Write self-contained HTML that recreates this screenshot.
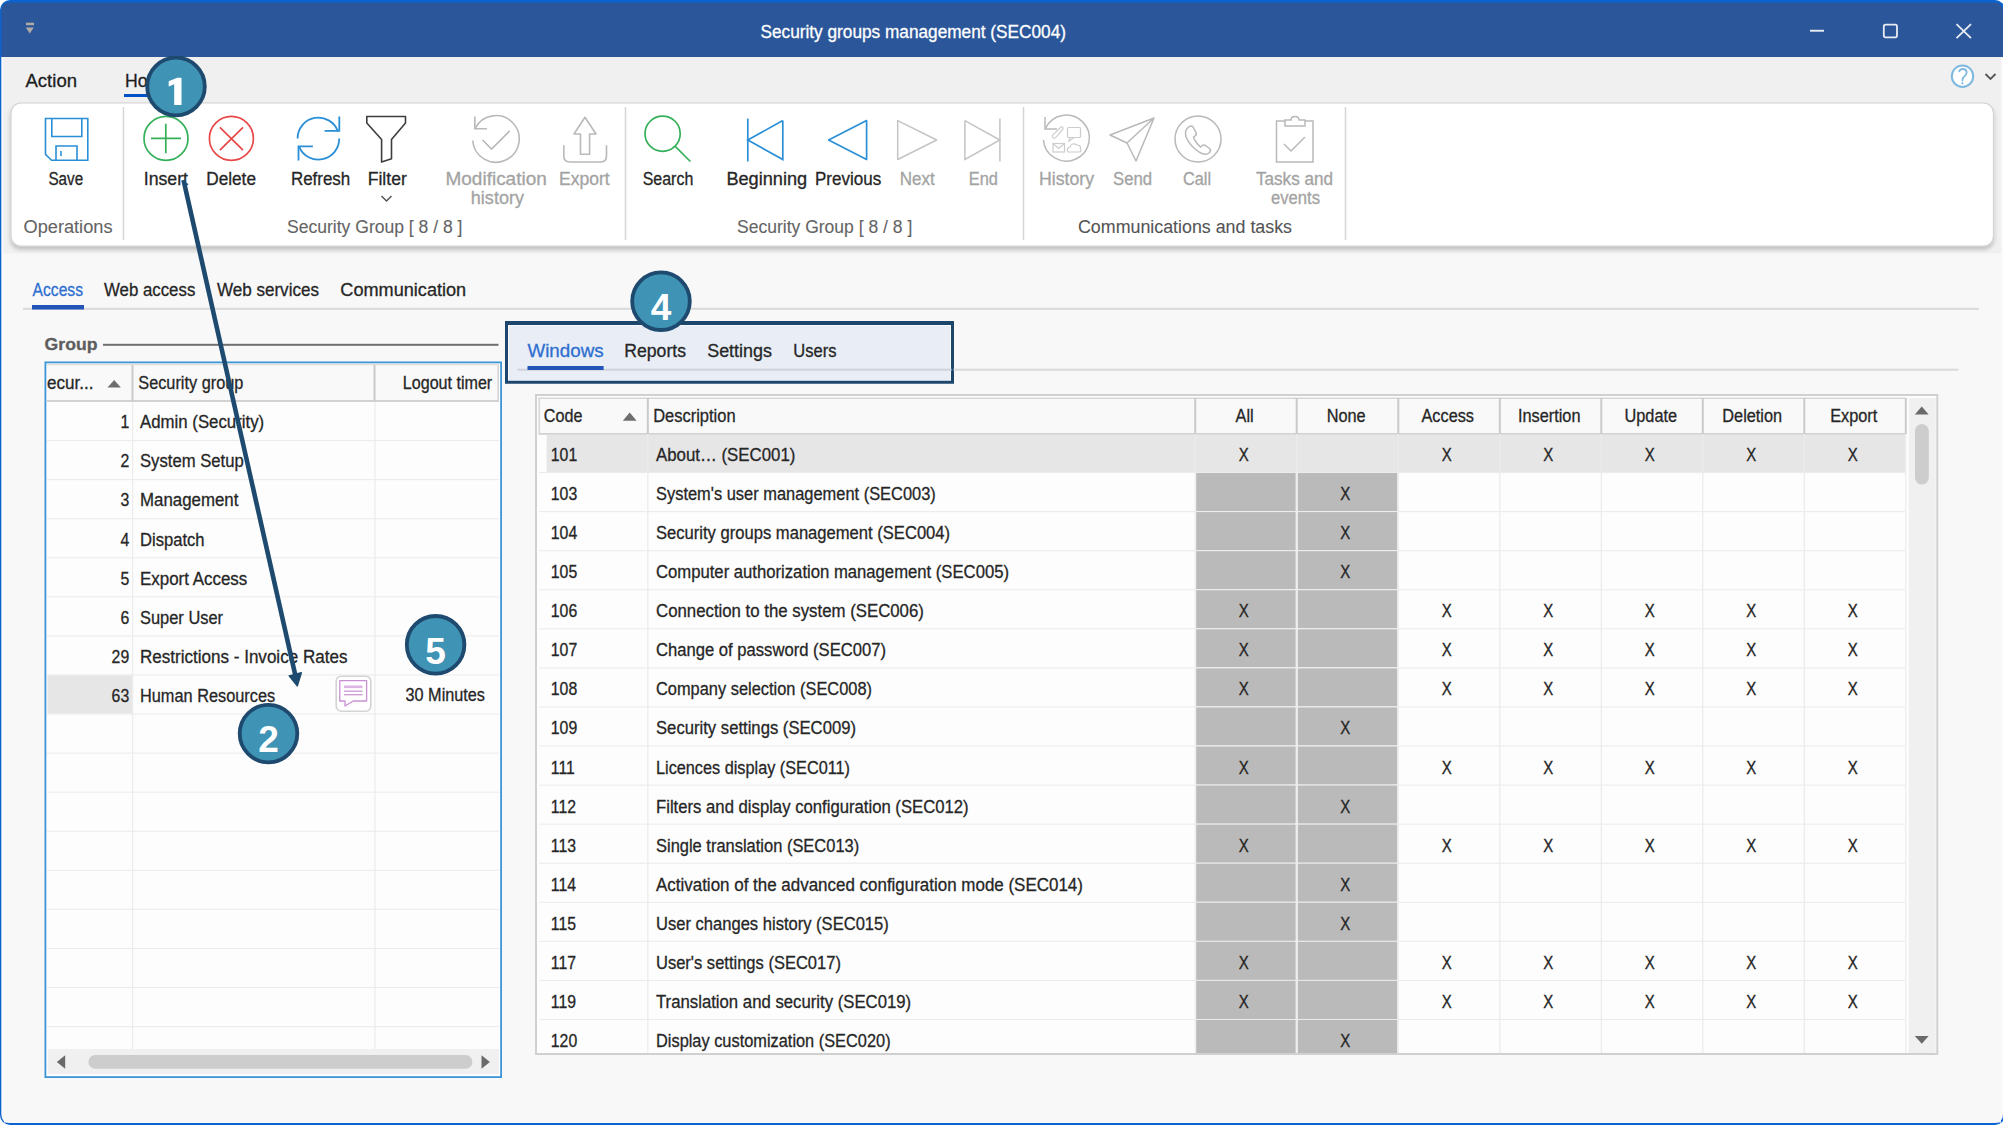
<!DOCTYPE html>
<html><head><meta charset="utf-8"><title>Security groups management (SEC004)</title>
<style>html,body{margin:0;padding:0;background:#fff;overflow:hidden}svg{display:block;font-family:"Liberation Sans",sans-serif}</style>
</head><body>
<svg width="2003" height="1125" viewBox="0 0 2003 1125">
<rect x="0" y="0" width="2003" height="1125" fill="#ffffff"/>
<rect x="0" y="0" width="2005" height="1125" rx="10" ry="10" fill="#0b63cf"/>
<path d="M1.3,57 L1.3,11 Q1.3,2.6 9.7,2.6 L1994,2.6 Q2003,2.6 2003,11.5 L2003,57 Z" fill="#2b579a"/>
<path d="M1.3,57 L1.3,1114 Q1.3,1123 10.3,1123 L1994,1123 Q2003,1123 2003,1114 L2003,57 Z" fill="#fafafa"/>
<rect x="26" y="22.7" width="8" height="2.5" fill="#b0aaa4"/><path d="M25.8,27.6 L33.8,27.6 L29.8,33.4 Z" fill="#b0aaa4"/>
<text x="760.5" y="38.0" font-size="18.3" fill="#ffffff" stroke="#ffffff" stroke-width="0.3" textLength="305.5" lengthAdjust="spacingAndGlyphs">Security groups management (SEC004)</text>
<rect x="1810" y="29.8" width="14" height="1.9" fill="#e9ecf3"/>
<rect x="1883.8" y="24.6" width="13.2" height="12.8" rx="1.8" fill="none" stroke="#e9ecf3" stroke-width="1.8"/>
<path d="M1956.5,24.2 L1971,38.2 M1971,24.2 L1956.5,38.2" stroke="#e9ecf3" stroke-width="1.8"/>
<rect x="3.1" y="57" width="1998" height="197" fill="#f0f0f0"/>
<text x="25.5" y="86.5" font-size="18.3" fill="#1e1e1e" stroke="#1e1e1e" stroke-width="0.3" textLength="51.5" lengthAdjust="spacingAndGlyphs">Action</text>
<text x="125.0" y="86.5" font-size="18.3" fill="#1e1e1e" stroke="#1e1e1e" stroke-width="0.3" textLength="47.0" lengthAdjust="spacingAndGlyphs">Home</text>
<rect x="124" y="94" width="52" height="3" fill="#0050c8"/>
<circle cx="1962.5" cy="76.2" r="10.7" fill="#ffffff" stroke="#80b9e0" stroke-width="2"/>
<path d="M1959.2,71.3 Q1960,69 1962.8,69 Q1966.6,69 1966.6,72.5 Q1966.6,75 1963.8,77 Q1962.4,78.2 1962.4,80.6" fill="none" stroke="#80b9e0" stroke-width="1.8" stroke-linecap="round"/><circle cx="1962.4" cy="83.3" r="1.15" fill="#80b9e0"/>
<path d="M1985.5,74 L1990.5,79 L1995.5,74" fill="none" stroke="#555" stroke-width="1.8"/>
<defs><filter id="sh" x="-5%" y="-20%" width="110%" height="140%"><feGaussianBlur in="SourceAlpha" stdDeviation="2"/><feOffset dy="2.5"/><feComponentTransfer><feFuncA type="linear" slope="0.22"/></feComponentTransfer><feMerge><feMergeNode/><feMergeNode in="SourceGraphic"/></feMerge></filter></defs>
<rect x="11" y="103" width="1982.5" height="143" rx="10" ry="10" fill="#ffffff" stroke="#d2d2d2" stroke-width="1.2" filter="url(#sh)"/>
<rect x="122.75" y="107" width="1.5" height="133" fill="#d6d6d6"/>
<rect x="624.75" y="107" width="1.5" height="133" fill="#d6d6d6"/>
<rect x="1022.75" y="107" width="1.5" height="133" fill="#d6d6d6"/>
<rect x="1344.75" y="107" width="1.5" height="133" fill="#d6d6d6"/>
<g fill="none" stroke="#2a8fd6" stroke-width="1.6"><path d="M45.5,118.5 L87.8,118.5 L87.8,160.3 L51.5,160.3 L45.5,154.3 Z"/><path d="M51.8,118.5 L51.8,136.5 L81.8,136.5 L81.8,118.5"/><path d="M56,160.3 L56,146 L77,146 L77,160.3"/><path d="M61,151 L61,156"/></g>
<text x="48.4" y="184.7" font-size="18.3" fill="#262626" stroke="#262626" stroke-width="0.3" textLength="34.8" lengthAdjust="spacingAndGlyphs">Save</text>
<text x="23.5" y="232.9" font-size="18.3" fill="#646464" stroke="#646464" stroke-width="0.1" textLength="89.0" lengthAdjust="spacingAndGlyphs">Operations</text>
<g fill="none" stroke="#35b05a" stroke-width="1.7"><circle cx="166" cy="138.4" r="22"/><path d="M151,138.4 L181,138.4 M165.8,123.8 L165.8,153.2"/></g>
<text x="143.8" y="184.7" font-size="18.3" fill="#262626" stroke="#262626" stroke-width="0.3" textLength="44.2" lengthAdjust="spacingAndGlyphs">Insert</text>
<g fill="none" stroke="#e94848" stroke-width="1.7"><circle cx="231.4" cy="138.4" r="22"/><path d="M219.9,127.3 L243,150.2 M243,127.3 L219.9,150.2"/></g>
<text x="206.2" y="184.7" font-size="18.3" fill="#262626" stroke="#262626" stroke-width="0.3" textLength="49.8" lengthAdjust="spacingAndGlyphs">Delete</text>
<g fill="none" stroke="#2a8fd6" stroke-width="1.8"><path d="M297.6,138.5 A20.8,20.8 0 0 1 337.9,131.2"/><path d="M339.3,116.4 L339.3,130.8 L324.6,130.8"/><path d="M339.2,138.5 A20.8,20.8 0 0 1 299.2,146.8"/><path d="M298.5,160.6 L298.5,146.3 L312.9,146.3"/></g>
<text x="290.9" y="184.7" font-size="18.3" fill="#262626" stroke="#262626" stroke-width="0.3" textLength="59.4" lengthAdjust="spacingAndGlyphs">Refresh</text>
<path d="M366.8,116.5 L405.5,116.5 L405.5,123 L391.5,139.5 L391.5,158.7 L381.6,162 L381.6,139.5 L366.8,123 Z" fill="none" stroke="#3d3d3d" stroke-width="1.6" stroke-linejoin="round"/>
<text x="367.7" y="184.7" font-size="18.3" fill="#262626" stroke="#262626" stroke-width="0.3" textLength="39.1" lengthAdjust="spacingAndGlyphs">Filter</text>
<path d="M381.5,196 L386.5,201 L391.5,196" fill="none" stroke="#555" stroke-width="1.5"/>
<g fill="none" stroke="#b9b9b9" stroke-width="1.6"><path d="M475.2,128.3 A23.3,23.3 0 1 1 472.7,140.5"/><path d="M474.8,116.5 L474.8,128.8 L487,128.8"/><path d="M482.5,140 L491.6,149 L509.7,130.9"/></g>
<text x="445.5" y="184.7" font-size="18.3" fill="#a3a3a3" stroke="#a3a3a3" stroke-width="0.3" textLength="101.3" lengthAdjust="spacingAndGlyphs">Modification</text>
<text x="470.8" y="204.3" font-size="18.3" fill="#a3a3a3" stroke="#a3a3a3" stroke-width="0.3" textLength="53.2" lengthAdjust="spacingAndGlyphs">history</text>
<g fill="none" stroke="#b9b9b9" stroke-width="1.6" stroke-linejoin="round"><path d="M585,117.3 L596,134 L589.6,134 L589.6,154.3 L580.5,154.3 L580.5,134 L574,134 Z"/><path d="M563.8,145.2 L563.8,156 Q563.8,162 569.8,162 L600.5,162 Q606.5,162 606.5,156 L606.5,145.2"/></g>
<text x="559.0" y="184.7" font-size="18.3" fill="#a3a3a3" stroke="#a3a3a3" stroke-width="0.3" textLength="50.7" lengthAdjust="spacingAndGlyphs">Export</text>
<text x="287.0" y="232.9" font-size="18.3" fill="#646464" stroke="#646464" stroke-width="0.1" textLength="175.5" lengthAdjust="spacingAndGlyphs">Security Group [ 8 / 8 ]</text>
<g fill="none" stroke="#35b05a" stroke-width="1.7"><circle cx="662.6" cy="133.7" r="17.6"/><path d="M675,146.2 L690.4,161.5"/></g>
<text x="642.7" y="184.7" font-size="18.3" fill="#262626" stroke="#262626" stroke-width="0.3" textLength="50.6" lengthAdjust="spacingAndGlyphs">Search</text>
<g fill="none" stroke="#2a8fd6" stroke-width="1.7"><path d="M747.8,118.6 L747.8,161.5"/><path d="M782.8,120.6 L782.8,159.5 L747.8,140 L782.8,120.6"/></g>
<text x="726.4" y="184.7" font-size="18.3" fill="#262626" stroke="#262626" stroke-width="0.3" textLength="80.8" lengthAdjust="spacingAndGlyphs">Beginning</text>
<path d="M866.6,120.6 L866.6,159.5 L828.6,140 Z" fill="none" stroke="#2a8fd6" stroke-width="1.7" stroke-linejoin="round"/>
<text x="815.0" y="184.7" font-size="18.3" fill="#262626" stroke="#262626" stroke-width="0.3" textLength="66.2" lengthAdjust="spacingAndGlyphs">Previous</text>
<path d="M897.7,120.6 L897.7,159.5 L936.7,140 Z" fill="none" stroke="#c4c4c4" stroke-width="1.5" stroke-linejoin="round"/>
<text x="899.7" y="184.7" font-size="18.3" fill="#a3a3a3" stroke="#a3a3a3" stroke-width="0.3" textLength="35.0" lengthAdjust="spacingAndGlyphs">Next</text>
<g fill="none" stroke="#c4c4c4" stroke-width="1.5"><path d="M999.9,118.6 L999.9,161.5"/><path d="M964.9,120.6 L964.9,159.5 L999.9,140 L964.9,120.6"/></g>
<text x="968.8" y="184.7" font-size="18.3" fill="#a3a3a3" stroke="#a3a3a3" stroke-width="0.3" textLength="29.2" lengthAdjust="spacingAndGlyphs">End</text>
<text x="737.0" y="232.9" font-size="18.3" fill="#646464" stroke="#646464" stroke-width="0.1" textLength="175.3" lengthAdjust="spacingAndGlyphs">Security Group [ 8 / 8 ]</text>
<g fill="none" stroke="#b9b9b9" stroke-width="1.5"><path d="M1045.5,128.3 A23,23 0 1 1 1043.4,140"/><path d="M1045,117 L1045,129 L1057,129"/></g>
<g fill="none" stroke="#cdcdcd" stroke-width="1.2"><rect x="1067.5" y="127.5" width="13" height="10" rx="1"/><path d="M1070,137.5 L1069,141 L1074,137.5"/><rect x="1053" y="143.5" width="11.5" height="8.5"/><path d="M1053,143.5 L1058.7,148.5 L1064.5,143.5"/><path d="M1068,152 Q1066,148 1070,147 Q1072,142 1077,145 Q1081,145 1080.5,149 Q1082,152 1079,152 Z"/><path d="M1053,138 Q1051,135 1055,133 L1061,127 Q1063,126 1063,129 L1057,136 Q1055,139 1053,138 Z"/></g>
<text x="1039.0" y="184.7" font-size="18.3" fill="#a3a3a3" stroke="#a3a3a3" stroke-width="0.3" textLength="55.0" lengthAdjust="spacingAndGlyphs">History</text>
<path d="M1110,135 L1154,118 L1136,161 L1127,143 Z M1127,143 L1154,118" fill="none" stroke="#b9b9b9" stroke-width="1.5" stroke-linejoin="round"/>
<text x="1113.0" y="184.7" font-size="18.3" fill="#a3a3a3" stroke="#a3a3a3" stroke-width="0.3" textLength="39.0" lengthAdjust="spacingAndGlyphs">Send</text>
<g fill="none" stroke="#b9b9b9" stroke-width="1.5"><circle cx="1198" cy="139" r="23"/><path d="M1187.5,128 Q1191,124.5 1193,127 L1196,132.5 Q1197,134.5 1195,136 L1193.5,137 Q1195,142 1200.5,147 L1202,145.7 Q1203.5,144.3 1205.5,145.5 L1210,149 Q1211.5,151 1209,153 Q1205.5,156 1199,152 Q1190,146 1186,137 Q1184.5,131 1187.5,128 Z"/></g>
<text x="1183.0" y="184.7" font-size="18.3" fill="#a3a3a3" stroke="#a3a3a3" stroke-width="0.3" textLength="28.0" lengthAdjust="spacingAndGlyphs">Call</text>
<g fill="none" stroke="#b9b9b9" stroke-width="1.5"><path d="M1285,121 L1276.5,121 L1276.5,162 L1313,162 L1313,121 L1305,121"/><path d="M1285,126 L1285,120 L1291,120 Q1291,116.5 1295,116.5 Q1299,116.5 1299,120 L1305,120 L1305,126 Z"/><path d="M1284,144 L1291,151 L1305,137"/></g>
<text x="1256.0" y="184.7" font-size="18.3" fill="#a3a3a3" stroke="#a3a3a3" stroke-width="0.3" textLength="77.0" lengthAdjust="spacingAndGlyphs">Tasks and</text>
<text x="1271.0" y="204.3" font-size="18.3" fill="#a3a3a3" stroke="#a3a3a3" stroke-width="0.3" textLength="49.0" lengthAdjust="spacingAndGlyphs">events</text>
<text x="1078.0" y="232.9" font-size="18.3" fill="#545454" stroke="#545454" stroke-width="0.1" textLength="214.0" lengthAdjust="spacingAndGlyphs">Communications and tasks</text>
<rect x="4" y="253.5" width="1997" height="869.0" fill="#f8f8f8"/>
<rect x="23" y="307.8" width="1955.8" height="2" fill="#d9d9d9"/>
<text x="32.6" y="295.8" font-size="18.3" fill="#2f6fd0" stroke="#2f6fd0" stroke-width="0.3" textLength="50.4" lengthAdjust="spacingAndGlyphs">Access</text>
<rect x="32" y="305" width="52" height="4.5" fill="#2355b8"/>
<text x="104.0" y="296.0" font-size="18.3" fill="#262626" stroke="#262626" stroke-width="0.3" textLength="91.3" lengthAdjust="spacingAndGlyphs">Web access</text>
<text x="216.9" y="296.0" font-size="18.3" fill="#262626" stroke="#262626" stroke-width="0.3" textLength="102.1" lengthAdjust="spacingAndGlyphs">Web services</text>
<text x="340.3" y="296.0" font-size="18.3" fill="#262626" stroke="#262626" stroke-width="0.3" textLength="125.9" lengthAdjust="spacingAndGlyphs">Communication</text>
<text x="44.6" y="349.6" font-size="16.5" fill="#5e5e5e" font-weight="bold" stroke="#5e5e5e" stroke-width="0.3" textLength="52.8" lengthAdjust="spacingAndGlyphs">Group</text>
<rect x="103" y="343.8" width="395.5" height="2" fill="#707070"/>
<rect x="45.5" y="362.5" width="455.5" height="714.5" fill="#fdfdfd"/>
<rect x="47" y="364.5" width="452" height="37" fill="#f9f9f9"/>
<rect x="47" y="364" width="452" height="1.2" fill="#e3dcd8"/>
<rect x="47" y="400" width="452" height="2" fill="#d2d2d2"/>
<rect x="131.5" y="365" width="2" height="36" fill="#cacaca"/>
<rect x="373.5" y="365" width="2" height="36" fill="#cacaca"/>
<rect x="497.5" y="365" width="1.5" height="36" fill="#d2d2d2"/>
<text x="47.0" y="388.6" font-size="18.3" fill="#262626" stroke="#262626" stroke-width="0.3" textLength="46.5" lengthAdjust="spacingAndGlyphs">ecur...</text>
<path d="M107.5,387.4 L120.8,387.4 L114.2,380 Z" fill="#6e6e6e"/>
<text x="138.3" y="388.6" font-size="18.3" fill="#262626" stroke="#262626" stroke-width="0.3" textLength="105.0" lengthAdjust="spacingAndGlyphs">Security group</text>
<text x="402.8" y="388.6" font-size="18.3" fill="#262626" stroke="#262626" stroke-width="0.3" textLength="89.4" lengthAdjust="spacingAndGlyphs">Logout timer</text>
<rect x="47" y="440.00" width="452" height="1.1" fill="#ececec"/>
<rect x="47" y="479.07" width="452" height="1.1" fill="#ececec"/>
<rect x="47" y="518.14" width="452" height="1.1" fill="#ececec"/>
<rect x="47" y="557.21" width="452" height="1.1" fill="#ececec"/>
<rect x="47" y="596.28" width="452" height="1.1" fill="#ececec"/>
<rect x="47" y="635.35" width="452" height="1.1" fill="#ececec"/>
<rect x="47" y="674.42" width="452" height="1.1" fill="#ececec"/>
<rect x="47" y="713.49" width="452" height="1.1" fill="#ececec"/>
<rect x="47" y="752.56" width="452" height="1.1" fill="#ececec"/>
<rect x="47" y="791.63" width="452" height="1.1" fill="#ececec"/>
<rect x="47" y="830.70" width="452" height="1.1" fill="#ececec"/>
<rect x="47" y="869.77" width="452" height="1.1" fill="#ececec"/>
<rect x="47" y="908.84" width="452" height="1.1" fill="#ececec"/>
<rect x="47" y="947.91" width="452" height="1.1" fill="#ececec"/>
<rect x="47" y="986.98" width="452" height="1.1" fill="#ececec"/>
<rect x="47" y="1026.05" width="452" height="1.1" fill="#ececec"/>
<rect x="47" y="1065.12" width="452" height="1.1" fill="#ececec"/>
<rect x="132" y="402" width="1.2" height="647" fill="#ececec"/>
<rect x="374.3" y="402" width="1.2" height="647" fill="#ececec"/>
<rect x="47.5" y="675.5" width="84.5" height="38" fill="#e6e6e6"/>
<text x="120.4" y="428.3" font-size="18.3" fill="#262626" stroke="#262626" stroke-width="0.3" textLength="8.8" lengthAdjust="spacingAndGlyphs">1</text>
<text x="140.0" y="428.3" font-size="18.3" fill="#262626" stroke="#262626" stroke-width="0.3" textLength="124.2" lengthAdjust="spacingAndGlyphs">Admin (Security)</text>
<text x="120.4" y="467.4" font-size="18.3" fill="#262626" stroke="#262626" stroke-width="0.3" textLength="8.8" lengthAdjust="spacingAndGlyphs">2</text>
<text x="140.0" y="467.4" font-size="18.3" fill="#262626" stroke="#262626" stroke-width="0.3" textLength="103.7" lengthAdjust="spacingAndGlyphs">System Setup</text>
<text x="120.4" y="506.4" font-size="18.3" fill="#262626" stroke="#262626" stroke-width="0.3" textLength="8.8" lengthAdjust="spacingAndGlyphs">3</text>
<text x="140.0" y="506.4" font-size="18.3" fill="#262626" stroke="#262626" stroke-width="0.3" textLength="98.4" lengthAdjust="spacingAndGlyphs">Management</text>
<text x="120.4" y="545.5" font-size="18.3" fill="#262626" stroke="#262626" stroke-width="0.3" textLength="8.8" lengthAdjust="spacingAndGlyphs">4</text>
<text x="140.0" y="545.5" font-size="18.3" fill="#262626" stroke="#262626" stroke-width="0.3" textLength="64.6" lengthAdjust="spacingAndGlyphs">Dispatch</text>
<text x="120.4" y="584.6" font-size="18.3" fill="#262626" stroke="#262626" stroke-width="0.3" textLength="8.8" lengthAdjust="spacingAndGlyphs">5</text>
<text x="140.0" y="584.6" font-size="18.3" fill="#262626" stroke="#262626" stroke-width="0.3" textLength="107.3" lengthAdjust="spacingAndGlyphs">Export Access</text>
<text x="120.4" y="623.6" font-size="18.3" fill="#262626" stroke="#262626" stroke-width="0.3" textLength="8.8" lengthAdjust="spacingAndGlyphs">6</text>
<text x="140.0" y="623.6" font-size="18.3" fill="#262626" stroke="#262626" stroke-width="0.3" textLength="83.1" lengthAdjust="spacingAndGlyphs">Super User</text>
<text x="111.6" y="662.7" font-size="18.3" fill="#262626" stroke="#262626" stroke-width="0.3" textLength="17.6" lengthAdjust="spacingAndGlyphs">29</text>
<text x="140.0" y="662.7" font-size="18.3" fill="#262626" stroke="#262626" stroke-width="0.3" textLength="207.4" lengthAdjust="spacingAndGlyphs">Restrictions - Invoice Rates</text>
<text x="111.6" y="701.8" font-size="18.3" fill="#262626" stroke="#262626" stroke-width="0.3" textLength="17.6" lengthAdjust="spacingAndGlyphs">63</text>
<text x="140.0" y="701.8" font-size="18.3" fill="#262626" stroke="#262626" stroke-width="0.3" textLength="135.2" lengthAdjust="spacingAndGlyphs">Human Resources</text>
<text x="405.5" y="700.5" font-size="18.3" fill="#262626" stroke="#262626" stroke-width="0.3" textLength="79.5" lengthAdjust="spacingAndGlyphs">30 Minutes</text>
<rect x="336.2" y="676.2" width="34.6" height="35" rx="5" fill="#ffffff" stroke="#d4d4d4" stroke-width="1.6"/>
<path d="M339.8,680.6 L366.6,680.6 L366.6,701 L353.2,701 L345,706 L345,701 L339.8,701 Z" fill="none" stroke="#c891d2" stroke-width="1.3" stroke-linejoin="round"/>
<rect x="344" y="685.5" width="18.5" height="2.6" fill="#dcb6e2"/><rect x="344" y="690.5" width="18.5" height="1.4" fill="#cf9fd7"/><rect x="344" y="694" width="18.5" height="1.4" fill="#cf9fd7"/>
<rect x="48" y="1049" width="451" height="25" fill="#f0f0f0"/>
<path d="M65.2,1055.2 L65.2,1068.8 L56.8,1062 Z" fill="#6a6a6a"/>
<rect x="88.4" y="1055" width="384" height="13.8" rx="6.9" fill="#cdcdcd"/>
<path d="M481.5,1055.2 L481.5,1068.8 L489.9,1062 Z" fill="#6a6a6a"/>
<rect x="45.4" y="362.4" width="455.7" height="714.7" fill="none" stroke="#3b95d6" stroke-width="1.8"/>
<rect x="508" y="325" width="443" height="56" fill="#e9eef6"/>
<rect x="508.5" y="325.5" width="442" height="55" fill="none" stroke="#f7f9fc" stroke-width="1"/>
<path d="M505,321 L954,321 L954,383.7 L505,383.7 Z M508,325 L508,380.8 L951,380.8 L951,325 Z" fill="#1d466c" fill-rule="evenodd"/>
<rect x="517.5" y="368.7" width="434" height="2" fill="#cfd3d9"/>
<rect x="953.5" y="368.7" width="1005" height="2" fill="#d9d9d9"/>
<text x="527.5" y="356.9" font-size="18.3" fill="#2f6fd0" stroke="#2f6fd0" stroke-width="0.3" textLength="76.1" lengthAdjust="spacingAndGlyphs">Windows</text>
<rect x="527.5" y="366" width="76.1" height="4" fill="#2355b8"/>
<text x="624.3" y="356.9" font-size="18.3" fill="#262626" stroke="#262626" stroke-width="0.3" textLength="61.7" lengthAdjust="spacingAndGlyphs">Reports</text>
<text x="707.2" y="356.9" font-size="18.3" fill="#262626" stroke="#262626" stroke-width="0.3" textLength="64.8" lengthAdjust="spacingAndGlyphs">Settings</text>
<text x="793.3" y="356.9" font-size="18.3" fill="#262626" stroke="#262626" stroke-width="0.3" textLength="43.2" lengthAdjust="spacingAndGlyphs">Users</text>
<rect x="535" y="394" width="1403.3" height="661" fill="#fdfdfd"/>
<rect x="538.5" y="398" width="1367" height="36" fill="#f9f9f9"/>
<rect x="538.5" y="397.5" width="1367" height="1.5" fill="#d6d6d6"/>
<rect x="538.5" y="433" width="1367" height="1.8" fill="#d2d2d2"/>
<rect x="538.5" y="398" width="1.5" height="36" fill="#d6d6d6"/>
<rect x="646.8" y="398" width="2" height="36" fill="#cacaca"/>
<rect x="1194.2" y="398" width="2" height="36" fill="#cacaca"/>
<rect x="1295.7" y="398" width="2" height="36" fill="#cacaca"/>
<rect x="1397.3" y="398" width="2" height="36" fill="#cacaca"/>
<rect x="1498.8" y="398" width="2" height="36" fill="#cacaca"/>
<rect x="1600.3" y="398" width="2" height="36" fill="#cacaca"/>
<rect x="1701.8" y="398" width="2" height="36" fill="#cacaca"/>
<rect x="1803.3" y="398" width="2" height="36" fill="#cacaca"/>
<rect x="1904.8" y="398" width="2" height="36" fill="#cacaca"/>
<text x="543.8" y="421.6" font-size="18.3" fill="#262626" stroke="#262626" stroke-width="0.3" textLength="38.6" lengthAdjust="spacingAndGlyphs">Code</text>
<path d="M622.8,420.8 L636.6,420.8 L629.7,412.6 Z" fill="#6e6e6e"/>
<text x="653.2" y="421.6" font-size="18.3" fill="#262626" stroke="#262626" stroke-width="0.3" textLength="82.4" lengthAdjust="spacingAndGlyphs">Description</text>
<text x="1235.6" y="421.6" font-size="18.3" fill="#262626" stroke="#262626" stroke-width="0.3" textLength="18.1" lengthAdjust="spacingAndGlyphs">All</text>
<text x="1326.7" y="421.6" font-size="18.3" fill="#262626" stroke="#262626" stroke-width="0.3" textLength="39.0" lengthAdjust="spacingAndGlyphs">None</text>
<text x="1421.5" y="421.6" font-size="18.3" fill="#262626" stroke="#262626" stroke-width="0.3" textLength="52.5" lengthAdjust="spacingAndGlyphs">Access</text>
<text x="1518.0" y="421.6" font-size="18.3" fill="#262626" stroke="#262626" stroke-width="0.3" textLength="62.5" lengthAdjust="spacingAndGlyphs">Insertion</text>
<text x="1624.5" y="421.6" font-size="18.3" fill="#262626" stroke="#262626" stroke-width="0.3" textLength="52.6" lengthAdjust="spacingAndGlyphs">Update</text>
<text x="1722.3" y="421.6" font-size="18.3" fill="#262626" stroke="#262626" stroke-width="0.3" textLength="59.8" lengthAdjust="spacingAndGlyphs">Deletion</text>
<text x="1830.2" y="421.6" font-size="18.3" fill="#262626" stroke="#262626" stroke-width="0.3" textLength="47.1" lengthAdjust="spacingAndGlyphs">Export</text>
<svg x="0" y="0" width="2003" height="1053">
<rect x="546.6" y="434.8" width="1358.5" height="37.6" fill="#e6e6e6"/>
<rect x="539" y="472.00" width="1366" height="1.1" fill="#ececec"/>
<text x="550.8" y="460.9" font-size="18.3" fill="#262626" stroke="#262626" stroke-width="0.3" textLength="26.4" lengthAdjust="spacingAndGlyphs">101</text>
<text x="656.0" y="460.9" font-size="18.3" fill="#262626" stroke="#262626" stroke-width="0.3" textLength="139.4" lengthAdjust="spacingAndGlyphs">About… (SEC001)</text>
<text x="1238.7" y="460.9" font-size="17.6" fill="#262626" stroke="#262626" stroke-width="0.3" textLength="10.0" lengthAdjust="spacingAndGlyphs">X</text>
<text x="1441.8" y="460.9" font-size="17.6" fill="#262626" stroke="#262626" stroke-width="0.3" textLength="10.0" lengthAdjust="spacingAndGlyphs">X</text>
<text x="1543.3" y="460.9" font-size="17.6" fill="#262626" stroke="#262626" stroke-width="0.3" textLength="10.0" lengthAdjust="spacingAndGlyphs">X</text>
<text x="1644.8" y="460.9" font-size="17.6" fill="#262626" stroke="#262626" stroke-width="0.3" textLength="10.0" lengthAdjust="spacingAndGlyphs">X</text>
<text x="1746.3" y="460.9" font-size="17.6" fill="#262626" stroke="#262626" stroke-width="0.3" textLength="10.0" lengthAdjust="spacingAndGlyphs">X</text>
<text x="1847.8" y="460.9" font-size="17.6" fill="#262626" stroke="#262626" stroke-width="0.3" textLength="10.0" lengthAdjust="spacingAndGlyphs">X</text>
<rect x="1196.2" y="473.00" width="99.5" height="38.1" fill="#bababa"/>
<rect x="1297.7" y="473.00" width="99.59999999999991" height="38.1" fill="#bababa"/>
<rect x="539" y="511.07" width="1366" height="1.1" fill="#ececec"/>
<text x="550.8" y="500.0" font-size="18.3" fill="#262626" stroke="#262626" stroke-width="0.3" textLength="26.4" lengthAdjust="spacingAndGlyphs">103</text>
<text x="656.0" y="500.0" font-size="18.3" fill="#262626" stroke="#262626" stroke-width="0.3" textLength="279.8" lengthAdjust="spacingAndGlyphs">System's user management (SEC003)</text>
<text x="1340.3" y="500.0" font-size="17.6" fill="#262626" stroke="#262626" stroke-width="0.3" textLength="10.0" lengthAdjust="spacingAndGlyphs">X</text>
<rect x="1196.2" y="512.07" width="99.5" height="38.1" fill="#bababa"/>
<rect x="1297.7" y="512.07" width="99.59999999999991" height="38.1" fill="#bababa"/>
<rect x="539" y="550.14" width="1366" height="1.1" fill="#ececec"/>
<text x="550.8" y="539.0" font-size="18.3" fill="#262626" stroke="#262626" stroke-width="0.3" textLength="26.4" lengthAdjust="spacingAndGlyphs">104</text>
<text x="656.0" y="539.0" font-size="18.3" fill="#262626" stroke="#262626" stroke-width="0.3" textLength="294.1" lengthAdjust="spacingAndGlyphs">Security groups management (SEC004)</text>
<text x="1340.3" y="539.0" font-size="17.6" fill="#262626" stroke="#262626" stroke-width="0.3" textLength="10.0" lengthAdjust="spacingAndGlyphs">X</text>
<rect x="1196.2" y="551.14" width="99.5" height="38.1" fill="#bababa"/>
<rect x="1297.7" y="551.14" width="99.59999999999991" height="38.1" fill="#bababa"/>
<rect x="539" y="589.21" width="1366" height="1.1" fill="#ececec"/>
<text x="550.8" y="578.1" font-size="18.3" fill="#262626" stroke="#262626" stroke-width="0.3" textLength="26.4" lengthAdjust="spacingAndGlyphs">105</text>
<text x="656.0" y="578.1" font-size="18.3" fill="#262626" stroke="#262626" stroke-width="0.3" textLength="353.0" lengthAdjust="spacingAndGlyphs">Computer authorization management (SEC005)</text>
<text x="1340.3" y="578.1" font-size="17.6" fill="#262626" stroke="#262626" stroke-width="0.3" textLength="10.0" lengthAdjust="spacingAndGlyphs">X</text>
<rect x="1196.2" y="590.21" width="99.5" height="38.1" fill="#bababa"/>
<rect x="1297.7" y="590.21" width="99.59999999999991" height="38.1" fill="#bababa"/>
<rect x="539" y="628.28" width="1366" height="1.1" fill="#ececec"/>
<text x="550.8" y="617.2" font-size="18.3" fill="#262626" stroke="#262626" stroke-width="0.3" textLength="26.4" lengthAdjust="spacingAndGlyphs">106</text>
<text x="656.0" y="617.2" font-size="18.3" fill="#262626" stroke="#262626" stroke-width="0.3" textLength="267.9" lengthAdjust="spacingAndGlyphs">Connection to the system (SEC006)</text>
<text x="1238.7" y="617.2" font-size="17.6" fill="#262626" stroke="#262626" stroke-width="0.3" textLength="10.0" lengthAdjust="spacingAndGlyphs">X</text>
<text x="1441.8" y="617.2" font-size="17.6" fill="#262626" stroke="#262626" stroke-width="0.3" textLength="10.0" lengthAdjust="spacingAndGlyphs">X</text>
<text x="1543.3" y="617.2" font-size="17.6" fill="#262626" stroke="#262626" stroke-width="0.3" textLength="10.0" lengthAdjust="spacingAndGlyphs">X</text>
<text x="1644.8" y="617.2" font-size="17.6" fill="#262626" stroke="#262626" stroke-width="0.3" textLength="10.0" lengthAdjust="spacingAndGlyphs">X</text>
<text x="1746.3" y="617.2" font-size="17.6" fill="#262626" stroke="#262626" stroke-width="0.3" textLength="10.0" lengthAdjust="spacingAndGlyphs">X</text>
<text x="1847.8" y="617.2" font-size="17.6" fill="#262626" stroke="#262626" stroke-width="0.3" textLength="10.0" lengthAdjust="spacingAndGlyphs">X</text>
<rect x="1196.2" y="629.28" width="99.5" height="38.1" fill="#bababa"/>
<rect x="1297.7" y="629.28" width="99.59999999999991" height="38.1" fill="#bababa"/>
<rect x="539" y="667.35" width="1366" height="1.1" fill="#ececec"/>
<text x="550.8" y="656.2" font-size="18.3" fill="#262626" stroke="#262626" stroke-width="0.3" textLength="26.4" lengthAdjust="spacingAndGlyphs">107</text>
<text x="656.0" y="656.2" font-size="18.3" fill="#262626" stroke="#262626" stroke-width="0.3" textLength="230.0" lengthAdjust="spacingAndGlyphs">Change of password (SEC007)</text>
<text x="1238.7" y="656.2" font-size="17.6" fill="#262626" stroke="#262626" stroke-width="0.3" textLength="10.0" lengthAdjust="spacingAndGlyphs">X</text>
<text x="1441.8" y="656.2" font-size="17.6" fill="#262626" stroke="#262626" stroke-width="0.3" textLength="10.0" lengthAdjust="spacingAndGlyphs">X</text>
<text x="1543.3" y="656.2" font-size="17.6" fill="#262626" stroke="#262626" stroke-width="0.3" textLength="10.0" lengthAdjust="spacingAndGlyphs">X</text>
<text x="1644.8" y="656.2" font-size="17.6" fill="#262626" stroke="#262626" stroke-width="0.3" textLength="10.0" lengthAdjust="spacingAndGlyphs">X</text>
<text x="1746.3" y="656.2" font-size="17.6" fill="#262626" stroke="#262626" stroke-width="0.3" textLength="10.0" lengthAdjust="spacingAndGlyphs">X</text>
<text x="1847.8" y="656.2" font-size="17.6" fill="#262626" stroke="#262626" stroke-width="0.3" textLength="10.0" lengthAdjust="spacingAndGlyphs">X</text>
<rect x="1196.2" y="668.35" width="99.5" height="38.1" fill="#bababa"/>
<rect x="1297.7" y="668.35" width="99.59999999999991" height="38.1" fill="#bababa"/>
<rect x="539" y="706.42" width="1366" height="1.1" fill="#ececec"/>
<text x="550.8" y="695.3" font-size="18.3" fill="#262626" stroke="#262626" stroke-width="0.3" textLength="26.4" lengthAdjust="spacingAndGlyphs">108</text>
<text x="656.0" y="695.3" font-size="18.3" fill="#262626" stroke="#262626" stroke-width="0.3" textLength="216.0" lengthAdjust="spacingAndGlyphs">Company selection (SEC008)</text>
<text x="1238.7" y="695.3" font-size="17.6" fill="#262626" stroke="#262626" stroke-width="0.3" textLength="10.0" lengthAdjust="spacingAndGlyphs">X</text>
<text x="1441.8" y="695.3" font-size="17.6" fill="#262626" stroke="#262626" stroke-width="0.3" textLength="10.0" lengthAdjust="spacingAndGlyphs">X</text>
<text x="1543.3" y="695.3" font-size="17.6" fill="#262626" stroke="#262626" stroke-width="0.3" textLength="10.0" lengthAdjust="spacingAndGlyphs">X</text>
<text x="1644.8" y="695.3" font-size="17.6" fill="#262626" stroke="#262626" stroke-width="0.3" textLength="10.0" lengthAdjust="spacingAndGlyphs">X</text>
<text x="1746.3" y="695.3" font-size="17.6" fill="#262626" stroke="#262626" stroke-width="0.3" textLength="10.0" lengthAdjust="spacingAndGlyphs">X</text>
<text x="1847.8" y="695.3" font-size="17.6" fill="#262626" stroke="#262626" stroke-width="0.3" textLength="10.0" lengthAdjust="spacingAndGlyphs">X</text>
<rect x="1196.2" y="707.42" width="99.5" height="38.1" fill="#bababa"/>
<rect x="1297.7" y="707.42" width="99.59999999999991" height="38.1" fill="#bababa"/>
<rect x="539" y="745.49" width="1366" height="1.1" fill="#ececec"/>
<text x="550.8" y="734.4" font-size="18.3" fill="#262626" stroke="#262626" stroke-width="0.3" textLength="26.4" lengthAdjust="spacingAndGlyphs">109</text>
<text x="656.0" y="734.4" font-size="18.3" fill="#262626" stroke="#262626" stroke-width="0.3" textLength="200.0" lengthAdjust="spacingAndGlyphs">Security settings (SEC009)</text>
<text x="1340.3" y="734.4" font-size="17.6" fill="#262626" stroke="#262626" stroke-width="0.3" textLength="10.0" lengthAdjust="spacingAndGlyphs">X</text>
<rect x="1196.2" y="746.49" width="99.5" height="38.1" fill="#bababa"/>
<rect x="1297.7" y="746.49" width="99.59999999999991" height="38.1" fill="#bababa"/>
<rect x="539" y="784.56" width="1366" height="1.1" fill="#ececec"/>
<text x="550.8" y="773.5" font-size="18.3" fill="#262626" stroke="#262626" stroke-width="0.3" textLength="24.0" lengthAdjust="spacingAndGlyphs">111</text>
<text x="656.0" y="773.5" font-size="18.3" fill="#262626" stroke="#262626" stroke-width="0.3" textLength="194.0" lengthAdjust="spacingAndGlyphs">Licences display (SEC011)</text>
<text x="1238.7" y="773.5" font-size="17.6" fill="#262626" stroke="#262626" stroke-width="0.3" textLength="10.0" lengthAdjust="spacingAndGlyphs">X</text>
<text x="1441.8" y="773.5" font-size="17.6" fill="#262626" stroke="#262626" stroke-width="0.3" textLength="10.0" lengthAdjust="spacingAndGlyphs">X</text>
<text x="1543.3" y="773.5" font-size="17.6" fill="#262626" stroke="#262626" stroke-width="0.3" textLength="10.0" lengthAdjust="spacingAndGlyphs">X</text>
<text x="1644.8" y="773.5" font-size="17.6" fill="#262626" stroke="#262626" stroke-width="0.3" textLength="10.0" lengthAdjust="spacingAndGlyphs">X</text>
<text x="1746.3" y="773.5" font-size="17.6" fill="#262626" stroke="#262626" stroke-width="0.3" textLength="10.0" lengthAdjust="spacingAndGlyphs">X</text>
<text x="1847.8" y="773.5" font-size="17.6" fill="#262626" stroke="#262626" stroke-width="0.3" textLength="10.0" lengthAdjust="spacingAndGlyphs">X</text>
<rect x="1196.2" y="785.56" width="99.5" height="38.1" fill="#bababa"/>
<rect x="1297.7" y="785.56" width="99.59999999999991" height="38.1" fill="#bababa"/>
<rect x="539" y="823.63" width="1366" height="1.1" fill="#ececec"/>
<text x="550.8" y="812.5" font-size="18.3" fill="#262626" stroke="#262626" stroke-width="0.3" textLength="25.2" lengthAdjust="spacingAndGlyphs">112</text>
<text x="656.0" y="812.5" font-size="18.3" fill="#262626" stroke="#262626" stroke-width="0.3" textLength="312.6" lengthAdjust="spacingAndGlyphs">Filters and display configuration (SEC012)</text>
<text x="1340.3" y="812.5" font-size="17.6" fill="#262626" stroke="#262626" stroke-width="0.3" textLength="10.0" lengthAdjust="spacingAndGlyphs">X</text>
<rect x="1196.2" y="824.63" width="99.5" height="38.1" fill="#bababa"/>
<rect x="1297.7" y="824.63" width="99.59999999999991" height="38.1" fill="#bababa"/>
<rect x="539" y="862.70" width="1366" height="1.1" fill="#ececec"/>
<text x="550.8" y="851.6" font-size="18.3" fill="#262626" stroke="#262626" stroke-width="0.3" textLength="25.2" lengthAdjust="spacingAndGlyphs">113</text>
<text x="656.0" y="851.6" font-size="18.3" fill="#262626" stroke="#262626" stroke-width="0.3" textLength="203.2" lengthAdjust="spacingAndGlyphs">Single translation (SEC013)</text>
<text x="1238.7" y="851.6" font-size="17.6" fill="#262626" stroke="#262626" stroke-width="0.3" textLength="10.0" lengthAdjust="spacingAndGlyphs">X</text>
<text x="1441.8" y="851.6" font-size="17.6" fill="#262626" stroke="#262626" stroke-width="0.3" textLength="10.0" lengthAdjust="spacingAndGlyphs">X</text>
<text x="1543.3" y="851.6" font-size="17.6" fill="#262626" stroke="#262626" stroke-width="0.3" textLength="10.0" lengthAdjust="spacingAndGlyphs">X</text>
<text x="1644.8" y="851.6" font-size="17.6" fill="#262626" stroke="#262626" stroke-width="0.3" textLength="10.0" lengthAdjust="spacingAndGlyphs">X</text>
<text x="1746.3" y="851.6" font-size="17.6" fill="#262626" stroke="#262626" stroke-width="0.3" textLength="10.0" lengthAdjust="spacingAndGlyphs">X</text>
<text x="1847.8" y="851.6" font-size="17.6" fill="#262626" stroke="#262626" stroke-width="0.3" textLength="10.0" lengthAdjust="spacingAndGlyphs">X</text>
<rect x="1196.2" y="863.70" width="99.5" height="38.1" fill="#bababa"/>
<rect x="1297.7" y="863.70" width="99.59999999999991" height="38.1" fill="#bababa"/>
<rect x="539" y="901.77" width="1366" height="1.1" fill="#ececec"/>
<text x="550.8" y="890.7" font-size="18.3" fill="#262626" stroke="#262626" stroke-width="0.3" textLength="25.2" lengthAdjust="spacingAndGlyphs">114</text>
<text x="656.0" y="890.7" font-size="18.3" fill="#262626" stroke="#262626" stroke-width="0.3" textLength="426.9" lengthAdjust="spacingAndGlyphs">Activation of the advanced configuration mode (SEC014)</text>
<text x="1340.3" y="890.7" font-size="17.6" fill="#262626" stroke="#262626" stroke-width="0.3" textLength="10.0" lengthAdjust="spacingAndGlyphs">X</text>
<rect x="1196.2" y="902.77" width="99.5" height="38.1" fill="#bababa"/>
<rect x="1297.7" y="902.77" width="99.59999999999991" height="38.1" fill="#bababa"/>
<rect x="539" y="940.84" width="1366" height="1.1" fill="#ececec"/>
<text x="550.8" y="929.7" font-size="18.3" fill="#262626" stroke="#262626" stroke-width="0.3" textLength="25.2" lengthAdjust="spacingAndGlyphs">115</text>
<text x="656.0" y="929.7" font-size="18.3" fill="#262626" stroke="#262626" stroke-width="0.3" textLength="232.8" lengthAdjust="spacingAndGlyphs">User changes history (SEC015)</text>
<text x="1340.3" y="929.7" font-size="17.6" fill="#262626" stroke="#262626" stroke-width="0.3" textLength="10.0" lengthAdjust="spacingAndGlyphs">X</text>
<rect x="1196.2" y="941.84" width="99.5" height="38.1" fill="#bababa"/>
<rect x="1297.7" y="941.84" width="99.59999999999991" height="38.1" fill="#bababa"/>
<rect x="539" y="979.91" width="1366" height="1.1" fill="#ececec"/>
<text x="550.8" y="968.8" font-size="18.3" fill="#262626" stroke="#262626" stroke-width="0.3" textLength="25.2" lengthAdjust="spacingAndGlyphs">117</text>
<text x="656.0" y="968.8" font-size="18.3" fill="#262626" stroke="#262626" stroke-width="0.3" textLength="184.9" lengthAdjust="spacingAndGlyphs">User's settings (SEC017)</text>
<text x="1238.7" y="968.8" font-size="17.6" fill="#262626" stroke="#262626" stroke-width="0.3" textLength="10.0" lengthAdjust="spacingAndGlyphs">X</text>
<text x="1441.8" y="968.8" font-size="17.6" fill="#262626" stroke="#262626" stroke-width="0.3" textLength="10.0" lengthAdjust="spacingAndGlyphs">X</text>
<text x="1543.3" y="968.8" font-size="17.6" fill="#262626" stroke="#262626" stroke-width="0.3" textLength="10.0" lengthAdjust="spacingAndGlyphs">X</text>
<text x="1644.8" y="968.8" font-size="17.6" fill="#262626" stroke="#262626" stroke-width="0.3" textLength="10.0" lengthAdjust="spacingAndGlyphs">X</text>
<text x="1746.3" y="968.8" font-size="17.6" fill="#262626" stroke="#262626" stroke-width="0.3" textLength="10.0" lengthAdjust="spacingAndGlyphs">X</text>
<text x="1847.8" y="968.8" font-size="17.6" fill="#262626" stroke="#262626" stroke-width="0.3" textLength="10.0" lengthAdjust="spacingAndGlyphs">X</text>
<rect x="1196.2" y="980.91" width="99.5" height="38.1" fill="#bababa"/>
<rect x="1297.7" y="980.91" width="99.59999999999991" height="38.1" fill="#bababa"/>
<rect x="539" y="1018.98" width="1366" height="1.1" fill="#ececec"/>
<text x="550.8" y="1007.9" font-size="18.3" fill="#262626" stroke="#262626" stroke-width="0.3" textLength="25.2" lengthAdjust="spacingAndGlyphs">119</text>
<text x="656.0" y="1007.9" font-size="18.3" fill="#262626" stroke="#262626" stroke-width="0.3" textLength="255.2" lengthAdjust="spacingAndGlyphs">Translation and security (SEC019)</text>
<text x="1238.7" y="1007.9" font-size="17.6" fill="#262626" stroke="#262626" stroke-width="0.3" textLength="10.0" lengthAdjust="spacingAndGlyphs">X</text>
<text x="1441.8" y="1007.9" font-size="17.6" fill="#262626" stroke="#262626" stroke-width="0.3" textLength="10.0" lengthAdjust="spacingAndGlyphs">X</text>
<text x="1543.3" y="1007.9" font-size="17.6" fill="#262626" stroke="#262626" stroke-width="0.3" textLength="10.0" lengthAdjust="spacingAndGlyphs">X</text>
<text x="1644.8" y="1007.9" font-size="17.6" fill="#262626" stroke="#262626" stroke-width="0.3" textLength="10.0" lengthAdjust="spacingAndGlyphs">X</text>
<text x="1746.3" y="1007.9" font-size="17.6" fill="#262626" stroke="#262626" stroke-width="0.3" textLength="10.0" lengthAdjust="spacingAndGlyphs">X</text>
<text x="1847.8" y="1007.9" font-size="17.6" fill="#262626" stroke="#262626" stroke-width="0.3" textLength="10.0" lengthAdjust="spacingAndGlyphs">X</text>
<rect x="1196.2" y="1019.98" width="99.5" height="38.1" fill="#bababa"/>
<rect x="1297.7" y="1019.98" width="99.59999999999991" height="38.1" fill="#bababa"/>
<rect x="539" y="1058.05" width="1366" height="1.1" fill="#ececec"/>
<text x="550.8" y="1046.9" font-size="18.3" fill="#262626" stroke="#262626" stroke-width="0.3" textLength="26.4" lengthAdjust="spacingAndGlyphs">120</text>
<text x="656.0" y="1046.9" font-size="18.3" fill="#262626" stroke="#262626" stroke-width="0.3" textLength="234.6" lengthAdjust="spacingAndGlyphs">Display customization (SEC020)</text>
<text x="1340.3" y="1046.9" font-size="17.6" fill="#262626" stroke="#262626" stroke-width="0.3" textLength="10.0" lengthAdjust="spacingAndGlyphs">X</text>
<rect x="647.1999999999999" y="434" width="1.2" height="621" fill="#ececec"/>
<rect x="1194.6000000000001" y="434" width="1.2" height="621" fill="#ececec"/>
<rect x="1296.1000000000001" y="434" width="1.2" height="621" fill="#ececec"/>
<rect x="1397.7" y="434" width="1.2" height="621" fill="#ececec"/>
<rect x="1499.2" y="434" width="1.2" height="621" fill="#ececec"/>
<rect x="1600.7" y="434" width="1.2" height="621" fill="#ececec"/>
<rect x="1702.2" y="434" width="1.2" height="621" fill="#ececec"/>
<rect x="1803.7" y="434" width="1.2" height="621" fill="#ececec"/>
<rect x="1905.2" y="434" width="1.2" height="621" fill="#ececec"/>
</svg>
<rect x="1908.8" y="398" width="27" height="655" fill="#f0f0f0"/>
<path d="M1914.8,414.4 L1928.7,414.4 L1921.75,406.6 Z" fill="#6a6a6a"/>
<rect x="1915" y="424" width="13.8" height="60.6" rx="6.9" fill="#cdcdcd"/>
<path d="M1914.8,1036 L1928.7,1036 L1921.75,1043.8 Z" fill="#6a6a6a"/>
<rect x="536" y="395" width="1401.3" height="659" fill="none" stroke="#d0d0d0" stroke-width="2"/>
<path d="M183.5,180 L295.5,676" stroke="#1d4a6e" stroke-width="4.6" fill="none"/>
<path d="M289.2,675.9 L301.3,672.7 L297.3,685.9 Z" fill="#1d4a6e" stroke="#1d4a6e" stroke-width="1.5" stroke-linejoin="round"/>
<circle cx="176" cy="86.5" r="28.8" fill="#3f93b4" stroke="#1d4a6e" stroke-width="3.8"/>
<path d="M177.3,77.7 L181.5,77.7 L181.5,105 L174.2,105 L174.2,84.2 L168.7,86.6 L168.7,81.2 Z" fill="#ffffff"/>
<circle cx="661" cy="301.2" r="28.8" fill="#3f93b4" stroke="#1d4a6e" stroke-width="3.8"/>
<text x="650.7" y="320.0" font-size="37" fill="#ffffff" font-weight="bold" textLength="20.6" lengthAdjust="spacingAndGlyphs">4</text>
<circle cx="435.6" cy="644.8" r="28.8" fill="#3f93b4" stroke="#1d4a6e" stroke-width="3.8"/>
<text x="425.3" y="663.6" font-size="37" fill="#ffffff" font-weight="bold" textLength="20.6" lengthAdjust="spacingAndGlyphs">5</text>
<circle cx="268.5" cy="733.6" r="28.8" fill="#3f93b4" stroke="#1d4a6e" stroke-width="3.8"/>
<text x="258.2" y="752.4" font-size="37" fill="#ffffff" font-weight="bold" textLength="20.6" lengthAdjust="spacingAndGlyphs">2</text>
</svg>
</body></html>
